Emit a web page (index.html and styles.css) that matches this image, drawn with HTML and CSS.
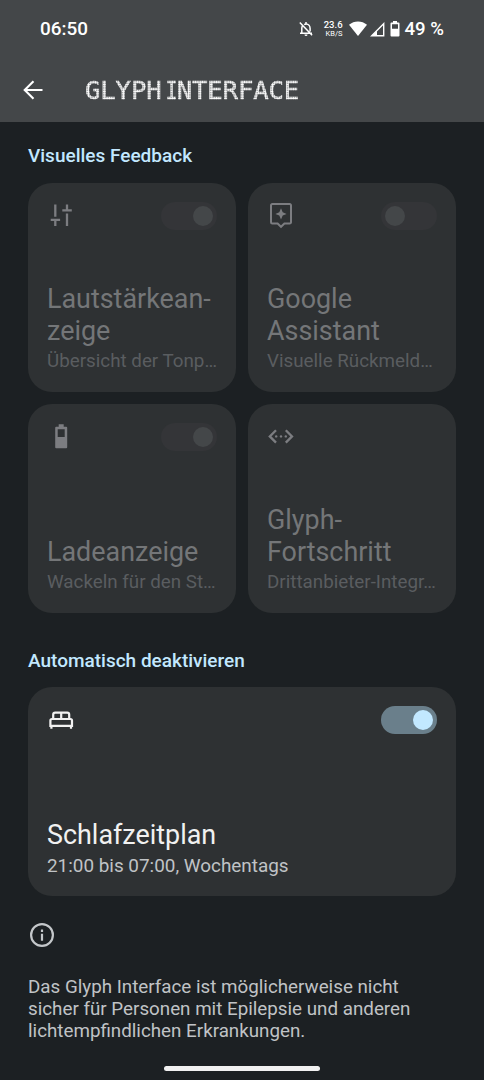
FILE: index.html
```html
<!DOCTYPE html>
<html lang="de">
<head>
<meta charset="utf-8">
<title>Glyph Interface</title>
<link rel="stylesheet" href="styles.css">
</head>
<body>
<header class="top">
  <div class="status">
    <span class="clock">06:50</span>
    <div class="status-icons">
      <svg class="bell" width="16" height="18" viewBox="0 0 16 18" fill="none" stroke="#fff" stroke-width="1.5"><path d="M2 13.2h12M3.800 13V8.200c0-1 .3-1.900.8-2.600M6.200 4.600c.6-.4 1.200-.6 1.900-.6 2.300 0 4 1.900 4 4.400v3M8 2v2M1.800 2.600l12.300 12.700"/><path d="M6.500 14.500h3a1.500 1.500 0 0 1-3 0z" fill="#fff" stroke="none"/></svg>
      <div class="speed"><span class="rate">23.6</span><span class="unit">KB/S</span></div>
      <svg class="wifi" width="18" height="16" viewBox="0 0 18 16"><path d="M0 3.800C5 -.7 13 -.7 18 3.800L9 15z" fill="#fff"/></svg>
      <svg class="signal" width="15" height="15" viewBox="0 0 15 15"><path d="M13.700 1.800v12H1.700z" fill="none" stroke="#fff" stroke-width="1.400"/><path d="M1.500 14L7 8.500V14z" fill="#fff"/></svg>
      <svg class="battery" width="10" height="16" viewBox="0 0 10 16"><path fill="#fff" fill-rule="evenodd" d="M3 0h4v1.500h1.500A1 1 0 0 1 9.500 2.500v12A1 1 0 0 1 8.500 15.500h-7A1 1 0 0 1 .5 14.500v-12A1 1 0 0 1 1.500 1.500H3zM2 3.300v4.500h6V3.300z"/></svg>
      <span class="percent">49 %</span>
    </div>
  </div>
  <div class="appbar">
    <svg class="back" width="20" height="20" viewBox="0 0 20 20" fill="none" stroke="#fff" stroke-width="2.100"><path d="M19.500 10H2M10.500 1.200L1.700 10l8.800 8.800"/></svg>
    <h1 class="title">GLYPH <span class="narrow">I</span>NTERFACE</h1>
  </div>
</header>
<main class="content">
  <h2 class="section">Visuelles Feedback</h2>
  <div class="grid">
    <section class="card disabled">
      <div class="card-top">
        <svg class="icon" width="28" height="28" viewBox="0 0 28 28" fill="none" stroke="currentColor" stroke-width="2.300"><path d="M8.300 3.500v12.300M3.700 18.800h9.400M8.300 18.800V25M20 3.500v5.800M15.300 9.300h9.500M20 12.500V25"/></svg>
        <span class="switch on"></span>
      </div>
      <h3>Lautstärkean-<br>zeige</h3>
      <p>Übersicht der Tonp…</p>
    </section>
    <section class="card disabled">
      <div class="card-top">
        <svg class="icon" width="28" height="28" viewBox="0 0 28 28"><path d="M5.300 3.100h17.400a1.300 1.300 0 0 1 1.300 1.300v16.800a1.300 1.300 0 0 1-1.300 1.300h-5.300L14 25.800l-3.400-3.300H5.300A1.300 1.300 0 0 1 4 21.200V4.400a1.300 1.300 0 0 1 1.300-1.300z" fill="none" stroke="currentColor" stroke-width="2"/><path d="M14 7.300l1.700 3.900 3.900 1.700-3.900 1.700L14 18.500l-1.700-3.900-3.900-1.700 3.900-1.700z" fill="currentColor"/></svg>
        <span class="switch"></span>
      </div>
      <h3>Google<br>Assistant</h3>
      <p>Visuelle Rückmeld…</p>
    </section>
    <section class="card disabled">
      <div class="card-top">
        <svg class="icon" width="28" height="28" viewBox="0 0 28 28"><path fill="currentColor" fill-rule="evenodd" d="M11.700 2.300h5v2.500h2.500a1 1 0 0 1 1 1v19.500a1 1 0 0 1-1 1h-10a1 1 0 0 1-1-1V5.800a1 1 0 0 1 1-1h2.500zM10.700 7.300V15h7V7.300z"/></svg>
        <span class="switch on"></span>
      </div>
      <h3>Ladeanzeige</h3>
      <p>Wackeln für den St…</p>
    </section>
    <section class="card disabled">
      <div class="card-top">
        <svg class="icon" width="28" height="28" viewBox="0 0 28 28"><path d="M9 8.200L2.800 14.400 9 20.600M18.800 8.200l6.200 6.200-6.200 6.200" fill="none" stroke="currentColor" stroke-width="2.300"/><g fill="currentColor"><circle cx="9.200" cy="14.400" r="1.200"/><circle cx="14" cy="14.400" r="1.200"/><circle cx="18.800" cy="14.400" r="1.200"/></g></svg>
      </div>
      <h3>Glyph-<br>Fortschritt</h3>
      <p>Drittanbieter-Integr…</p>
    </section>
  </div>
  <h2 class="section second">Automatisch deaktivieren</h2>
  <section class="card active">
    <div class="card-top">
      <svg class="icon" width="28" height="28" viewBox="0 0 28 28" fill="none" stroke="currentColor" stroke-width="2.200"><path d="M6.200 13.500V8.700a2 2 0 0 1 2-2h12a2 2 0 0 1 2 2v4.800M14.200 6.700v6.300M5 13h18.400a1.600 1.600 0 0 1 1.600 1.600v5.200H3.400v-5.200A1.600 1.600 0 0 1 5 13zM4.400 19.500v3.200M24 19.500v3.200"/></svg>
      <span class="switch on"></span>
    </div>
    <h3>Schlafzeitplan</h3>
    <p>21:00 bis 07:00, Wochentags</p>
  </section>
  <svg class="info" width="28" height="28" viewBox="0 0 28 28" fill="none" stroke="#c4c7ca" stroke-width="2.200"><circle cx="14" cy="14" r="10.900"/><path d="M14 12.800v7M14 8.500v2.500"/></svg>
  <p class="note">Das Glyph Interface ist möglicherweise nicht<br>sicher für Personen mit Epilepsie und anderen<br>lichtempfindlichen Erkrankungen.</p>
</main>
<div class="home"></div>
</body>
</html>
```
FILE: styles.css
```css
* { box-sizing: border-box; }
body {
  margin: 0;
  height: 1080px;
  display: flex;
  flex-direction: column;
  overflow: hidden;
  background: #1c2023;
  color: #f1f1f1;
  font-family: Roboto, sans-serif;
}
h1, h2, h3, p { margin: 0; font-weight: 400; }
.top { height: 122px; flex: none; background: #444749; color: #fff; }
.status {
  height: 58px;
  padding: 0 40px;
  display: flex;
  align-items: center;
  justify-content: space-between;
}
.clock { font-size: 18.9px; font-weight: 500; line-height: 24px; }
.percent { font-size: 18.6px; font-weight: 500; line-height: 24px; }
.status-icons { display: flex; align-items: center; }
.bell { margin-right: 10px; }
.speed { display: flex; flex-direction: column; align-items: flex-end; margin-right: 6px; font-weight: 500; }
.rate { font-size: 9.5px; line-height: 10px; }
.unit { font-size: 7.5px; line-height: 8px; font-weight: 400; }
.wifi { margin-right: 3px; }
.signal { margin-right: 5px; }
.battery { margin-right: 5px; }
.appbar { height: 64px; padding-left: 23px; display: flex; align-items: center; }
.back { flex: none; margin-top: -1px; margin-right: 42px; }
.title {
  font: 25.6px/32px "DejaVu Sans Mono", monospace;
  -webkit-text-stroke: 0.5px #fff;
  white-space: nowrap;
  word-spacing: -13.2px;
  letter-spacing: -0.1px;
  mask-image: radial-gradient(circle, #000 45%, rgba(0, 0, 0, 0.2) 85%);
  mask-size: 2.33px 2.33px;
}
.narrow {
  display: inline-block;
  letter-spacing: -2.4px;
  transform: scaleX(0.76);
  transform-origin: 7.7px 50%;
}
.content { padding: 0 28px; display: flex; flex-direction: column; flex: 1; }
.section {
  margin-top: 22px;
  font-size: 19px;
  line-height: 24px;
  font-weight: 500;
  color: #c2e8ff;
}
.section.second { margin-top: 36px; }
.grid {
  margin-top: 14.6px;
  display: grid;
  grid-template-columns: repeat(2, minmax(0, 1fr));
  grid-auto-rows: 209px;
  gap: 12px;
}
.card {
  height: 209px;
  padding: 19px;
  border-radius: 24px;
  background: #2e3133;
  display: flex;
  flex-direction: column;
  white-space: nowrap;
}
.card-top { display: flex; justify-content: space-between; align-items: center; height: 28px; margin-bottom: auto; }
.icon { position: relative; top: -0.5px; }
.card h3 { font-size: 26.9px; line-height: 32px; }
.card p { font-size: 18.9px; line-height: 22px; margin-top: 3.5px; margin-bottom: 0.5px; }
.card.disabled p { color: #5a5d60; font-size: 18.8px; }
.disabled h3 { color: #747678; }
.disabled .icon { color: #7c7d81; }
.active { margin-top: 14.6px; flex: none; }
.active p { color: #c0c3c6; }
.switch {
  width: 56px;
  height: 28px;
  padding: 4px;
  border-radius: 14px;
  background: #343538;
  display: flex;
}
.switch.on { justify-content: flex-end; }
.switch::before { content: ""; width: 20px; height: 20px; border-radius: 50%; background: #444749; }
.active .switch { background: #6a7f8b; }
.active .switch::before { background: #c2e8ff; }
.info { margin-top: 25px; flex: none; }
.note { margin-top: 26.500px; font-size: 18.8px; line-height: 22px; color: #c0c3c6; white-space: nowrap; }
.home { flex: none; align-self: center; width: 156px; height: 5px; margin-bottom: 9px; border-radius: 3px; background: #f1f1f1; }
```
